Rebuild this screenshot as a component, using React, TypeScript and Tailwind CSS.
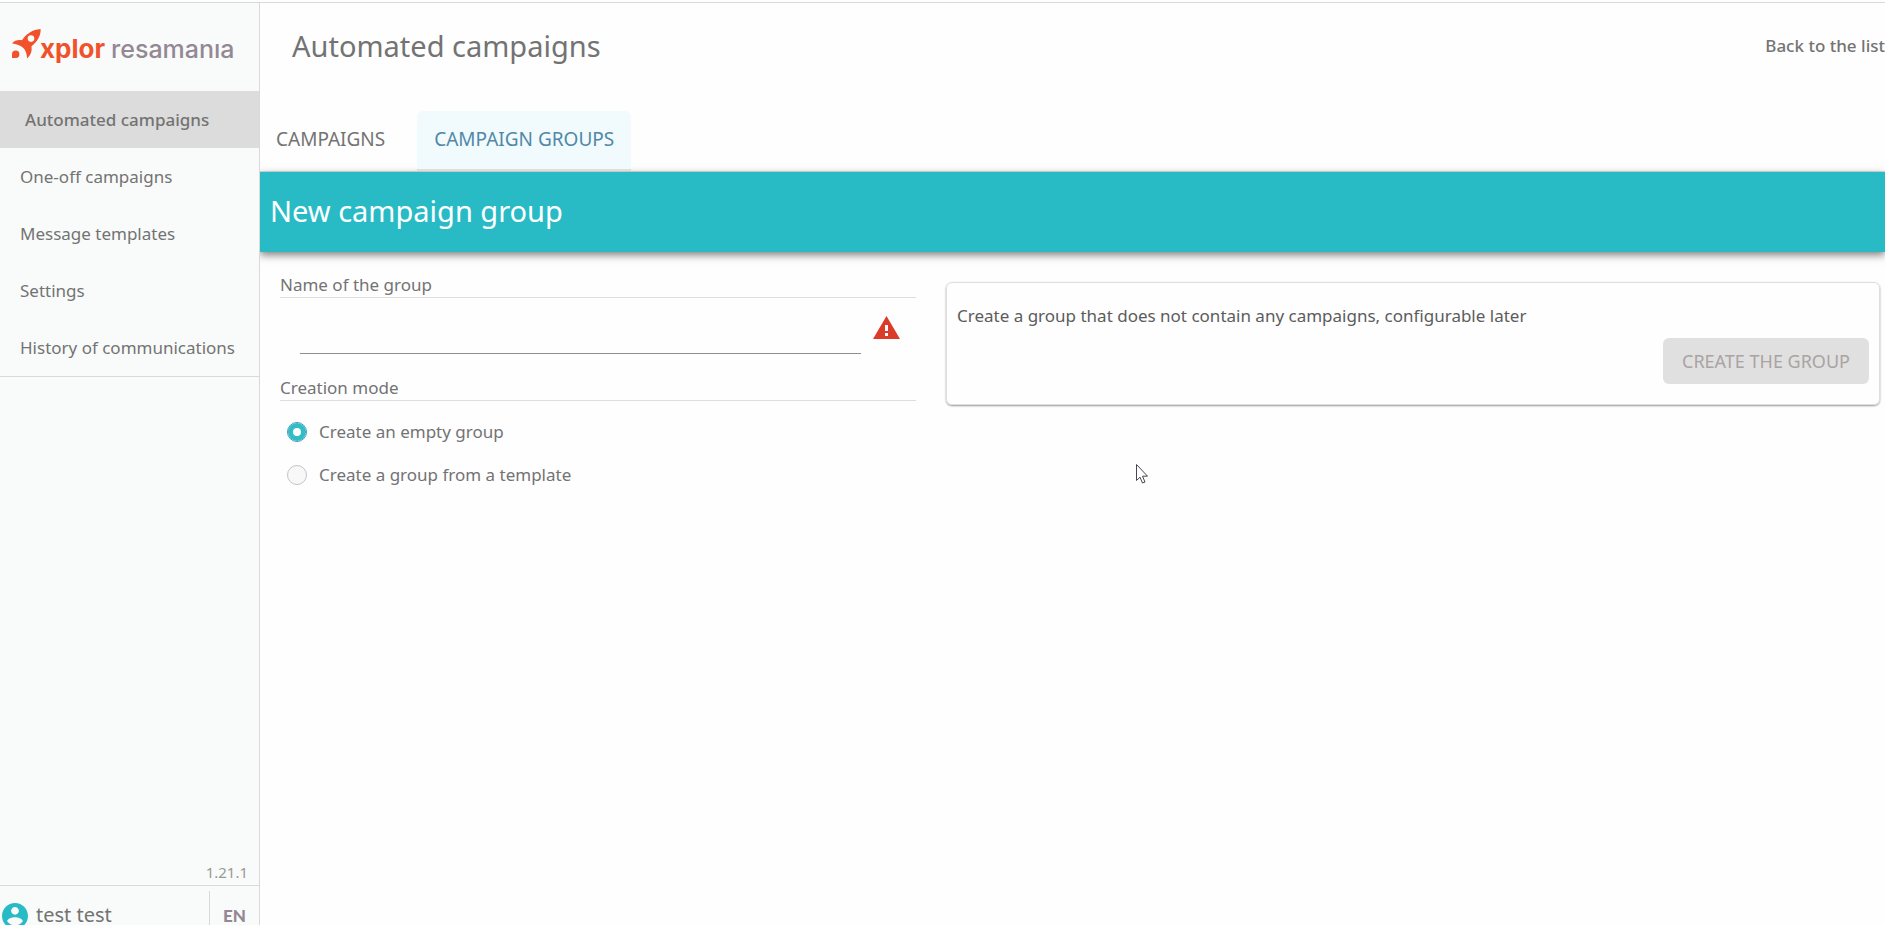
import React, { useState } from "react";

const navItems = [
  "Automated campaigns",
  "One-off campaigns",
  "Message templates",
  "Settings",
  "History of communications",
];

function Logo() {
  return (
    <a href="#home" aria-label="Xplor resamania" className="flex h-[88px] items-center pb-[7px] pl-3">
      <svg viewBox="0 0 30 30" className="h-[30px] w-[30px] shrink-0" fill="#f1512b" aria-hidden="true">
        <path
          fillRule="evenodd"
          d="M28.6 0C29 6.5 25.5 12.5 19.5 17.2C20.3 22 18.8 26 15.2 29.4C14.8 25.5 14 22.6 12.6 20.4C10.4 17.4 5.5 15 0 14.6C2 11.6 5.8 10.6 10 11.2C14 4.8 20.8 .6 28.6 0ZM19 6.3A3.3 3.3 0 1 0 19 12.9A3.3 3.3 0 1 0 19 6.3Z"
        />
        <path d="M0 29V25.2A3.7 3.7 0 1 1 3.8 29Z" />
      </svg>
      <span className="-ml-0.5 flex items-baseline gap-[6px] pt-[10px] font-[Inter,sans-serif] leading-8">
        <span className="text-[26px] font-bold text-[#f1512b]">xplor</span>
        <span className="text-[25px] font-medium text-[#938893]">resamanıa</span>
      </span>
    </a>
  );
}

function Sidebar() {
  return (
    <aside className="flex w-[260px] shrink-0 flex-col border-r border-[#d9d9d9] bg-[#f9fbfa]">
      <Logo />
      <nav className="border-b border-[#d9d9d9]">
        {navItems.map((item, i) => (
          <a
            key={item}
            href="#nav"
            aria-current={i === 0 ? "page" : undefined}
            className={
              i === 0
                ? "flex h-[57px] items-center bg-[#dcdcdc] pl-[25px] text-[17px] font-medium"
                : "flex h-[57px] items-center pl-5 text-[17px]"
            }
          >
            {item}
          </a>
        ))}
      </nav>
      <div className="flex-1" />
      <p className="pb-px pr-[11px] text-right text-[15px] leading-6 text-[#999999]">1.21.1</p>
      <div className="flex h-10 border-t border-[#d9d9d9]">
        <a href="#account" className="flex flex-1 items-start gap-2 pl-0.5 pt-[17px] text-[20px] leading-5">
          <svg viewBox="2 2 20 20" className="h-[26px] w-[26px]" fill="#28bbc6" aria-hidden="true">
            <path d="M12 2C6.48 2 2 6.48 2 12s4.48 10 10 10 10-4.48 10-10S17.52 2 12 2zm0 3c1.66 0 3 1.34 3 3s-1.34 3-3 3-3-1.34-3-3 1.34-3 3-3zm0 14.200c-2.500 0-4.710-1.280-6-3.220.03-1.990 4-3.080 6-3.080 1.990 0 5.970 1.090 6 3.080-1.290 1.940-3.500 3.220-6 3.220z" />
          </svg>
          <span className="pt-0.5">test test</span>
        </a>
        <button className="mt-[5px] w-[50px] border-l border-[#d9d9d9] pt-4 font-[Lato,sans-serif] text-[17px] font-black leading-4 text-[#938893]">
          EN
        </button>
      </div>
    </aside>
  );
}

function SectionTitle({ children, htmlFor }: { children: React.ReactNode; htmlFor?: string }) {
  const style = "block w-full border-b border-[#dedede] text-[17px] leading-6";
  return htmlFor ? (
    <label htmlFor={htmlFor} className={style}>{children}</label>
  ) : (
    <legend className={style}>{children}</legend>
  );
}

export default function App() {
  const [name, setName] = useState("");
  const [mode, setMode] = useState("empty");
  const modes = [
    { id: "empty", label: "Create an empty group" },
    { id: "template", label: "Create a group from a template" },
  ];
  return (
    <div className="flex h-screen flex-col overflow-hidden bg-[#fefefe] pt-0.5 font-['Noto_Sans',sans-serif] text-[#737373]">
      <div className="flex min-h-0 flex-1 border-t border-[#d9d9d9]">
        <Sidebar />
        <main className="min-w-0 flex-1 overflow-hidden">
          <header className="flex h-[88px] items-center justify-between pb-0.5 pl-8">
            <h1 className="text-[29px] leading-10">Automated campaigns</h1>
            <a href="#list" className="whitespace-nowrap text-[17px] font-medium">Back to the list</a>
          </header>
          <div role="tablist" className="mt-5 flex h-[61px] gap-4 border-b border-[#dedede]">
            <button role="tab" aria-selected="false" className="border-b-2 border-transparent px-4 pb-0.5 text-[19px]">
              CAMPAIGNS
            </button>
            <button role="tab" aria-selected="true" className="min-w-[214px] rounded-t-md border-b-2 border-[#dedede] bg-[#f1fafc] px-4 pb-0.5 text-[19px] text-[#5088a8]">
              CAMPAIGN GROUPS
            </button>
          </div>
          <h2 className="flex h-20 items-center bg-[#28bbc6] pb-0.5 pl-[10px] text-[29px] text-white shadow-[0_3px_8px_rgba(0,0,0,0.5)]">
            New campaign group
          </h2>
          <div className="grid grid-cols-[636fr_934fr] items-start gap-[30px] pl-5 pr-[5px]">
            <form className="pt-[21px]" onSubmit={(e) => e.preventDefault()}>
              <SectionTitle htmlFor="group-name">Name of the group</SectionTitle>
              <div className="flex h-14 items-start gap-3 pl-5 pr-4">
                <input
                  id="group-name"
                  value={name}
                  onChange={(e) => setName(e.target.value)}
                  className="h-14 min-w-0 flex-1 border-b border-[#8f8f8f] bg-transparent text-[17px] outline-none"
                />
                <svg viewBox="0 0 27 23" className="mt-[18px] h-[23px] w-[27px]" fill="#dc3b2a" aria-hidden="true">
                  <path fillRule="evenodd" d="M13.500 0L27 23H0ZM12 9V15H15V9ZM12 17V20H15V17Z" />
                </svg>
              </div>
              <fieldset className="mt-[22px]">
                <SectionTitle>Creation mode</SectionTitle>
                <div className="flex flex-col gap-[19px] pl-[7px] pt-[19px]">
                  {modes.map((m) => (
                    <label key={m.id} className="flex items-center gap-3 text-[17px] leading-6">
                      <input
                        type="radio"
                        name="mode"
                        checked={mode === m.id}
                        onChange={() => setMode(m.id)}
                        className="h-5 w-5 appearance-none rounded-full border border-[#c4c4c4] bg-[#f8f8f8] checked:border-[#3a9fb8] checked:bg-white checked:shadow-[inset_0_0_0_5px_#33bcc8]"
                      />
                      {m.label}
                    </label>
                  ))}
                </div>
              </fieldset>
            </form>
            <section className="mt-[30px] flex h-[123px] flex-col rounded-md border border-[#dedede] px-[10px] pt-[21px] shadow-[0_1px_2px_rgba(0,0,0,0.4)]">
              <p className="text-[17px] leading-6 text-[#5c5c5c]">
                Create a group that does not contain any campaigns, configurable later
              </p>
              <button disabled className="mt-[10px] h-[46px] w-[206px] self-end rounded-md bg-[#e0e0e0] text-[18px] text-[#aaa3a3]">
                CREATE THE GROUP
              </button>
            </section>
          </div>
        </main>
      </div>
      <svg viewBox="0 0 12 20" className="absolute left-[1136px] top-[464px] h-5 w-3" aria-hidden="true">
        <path d="M.5 .5V16.500L4 13.200L6.500 19L9 18L6.500 12.200H11.500Z" fill="#fff" stroke="#4a4550" />
      </svg>
    </div>
  );
}
